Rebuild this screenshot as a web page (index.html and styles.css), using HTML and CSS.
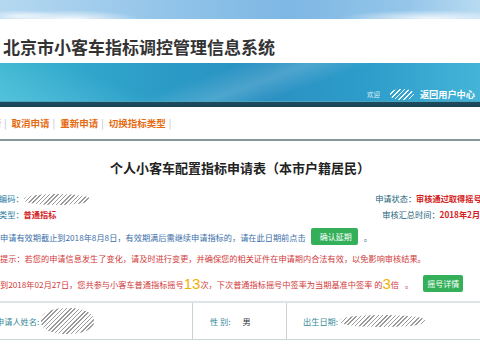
FILE: index.html
```html
<!DOCTYPE html>
<html lang="zh-CN">
<head>
<meta charset="utf-8">
<title>北京市小客车指标调控管理信息系统</title>
<link rel="stylesheet" href="styles.css">
</head>
<body>
<header class="header">
  <div class="sky"></div>
  <div class="title-bar"><h1 class="site-title">北京市小客车指标调控管理信息系统</h1></div>
  <div class="banner">
    <div class="welcome">
      <span class="welcome-label">欢迎</span>
      <span class="redact redact-user"></span>
      <a class="back-link">返回用户中心</a>
    </div>
  </div>
</header>
<nav class="actions">
  <a class="action">申请</a><span class="sep">|</span>
  <a class="action">取消申请</a><span class="sep">|</span>
  <a class="action">重新申请</a><span class="sep">|</span>
  <a class="action">切换指标类型</a><span class="sep">|</span>
</nav>
<div class="divider"></div>
<main class="form">
  <h2 class="form-title">个人小客车配置指标申请表（本市户籍居民）</h2>
  <div class="info">
    <div class="info-left">
      <div class="info-line"><span class="label">编码：</span><span class="redact redact-code"></span></div>
      <div class="info-line"><span class="label">类型：</span><span class="value-red">普通指标</span></div>
    </div>
    <div class="info-right">
      <div class="info-line"><span class="label-dark">申请状态：</span><span class="value-red">审核通过取得摇号资格</span></div>
      <div class="info-line"><span class="label-dark">审核汇总时间：</span><span class="value-red">2018年2月28日</span></div>
    </div>
  </div>
  <p class="notice notice-blue">申请有效期截止到2018年8月8日，有效期满后需继续申请指标的，请在此日期前点击<button class="btn btn-extend">确认延期</button><span class="period">。</span></p>
  <p class="notice notice-red notice-tip">提示：若您的申请信息发生了变化，请及时进行变更，并确保您的相关证件在申请期内合法有效，以免影响审核结果。</p>
  <p class="notice notice-red notice-lottery">到2018年02月27日，您共参与小客车普通指标摇号<span class="big-num">13</span>次，下次普通指标摇号中签率为当期基准中签率 的<span class="big-num">3</span>倍 <span class="period">。</span><button class="btn btn-detail">摇号详情</button></p>
  <div class="person-row">
    <div class="cell cell-name"><span class="cell-label">申请人姓名:</span><span class="redact redact-name"></span></div>
    <div class="cell cell-sex"><span class="cell-label">性 别:</span><span class="cell-value">男</span></div>
    <div class="cell cell-birth"><span class="cell-label">出生日期:</span><span class="redact redact-birth"></span></div>
  </div>
</main>
</body>
</html>
```
FILE: styles.css
```css
* { box-sizing: border-box; margin: 0; padding: 0; }
html, body { width: 480px; height: 346px; overflow: hidden; background: #fff; }
body {
  font-family: "Noto Sans CJK SC", "Noto Sans", sans-serif;
  font-size: 8.2px;
  color: #333;
}

.sky {
  height: 19px;
  background:
    radial-gradient(ellipse 70px 9px at 70px 19px, rgba(255,255,255,.85), rgba(255,255,255,0)),
    radial-gradient(ellipse 40px 6px at 20px 16px, rgba(255,255,255,.7), rgba(255,255,255,0)),
    radial-gradient(ellipse 90px 8px at 430px 18px, rgba(255,255,255,.8), rgba(255,255,255,0)),
    linear-gradient(90deg, #b5d8f0 0%, #92c4e9 35%, #7db7e3 60%, #95c6ea 85%, #b8daf1 100%);
}

.title-bar { height: 44px; padding: 18px 0 0 3px; }
.site-title {
  font-size: 17px;
  line-height: 20px;
  font-weight: 700;
  color: #333;
  white-space: nowrap;
}

.banner {
  height: 44px;
  display: flex;
  justify-content: flex-end;
  align-items: flex-end;
  padding: 0 5px 7px 0;
  background:
    linear-gradient(to bottom, rgba(0,0,0,0) 86%, #4aa3bf 86%, #4aa3bf 89%, #1d4b5e 89%, #1a4455 100%),
    linear-gradient(160deg, rgba(255,255,255,0) 40%, rgba(255,255,255,.16) 52%, rgba(255,255,255,0) 62%),
    linear-gradient(20deg, rgba(120,215,235,.45) 0%, rgba(120,215,235,0) 30%),
    linear-gradient(90deg, #3ab4d0 0%, #2c9ec8 30%, #2a90c2 55%, #2e9ecb 78%, #44b5d8 100%);
}
.welcome { display: flex; align-items: center; white-space: nowrap; line-height: 12px; }
.welcome-label { font-size: 6.5px; color: #d4eef6; margin-right: 10px; }
.back-link { font-size: 9.2px; font-weight: 700; color: #fff; margin-left: 6px; }

.redact {
  display: inline-block;
  background: repeating-linear-gradient(135deg, #9a9a9a 0 1px, rgba(255,255,255,0) 1px 3px);
  border-radius: 45%;
}
.redact-user {
  width: 24px; height: 11px;
  background: repeating-linear-gradient(135deg, rgba(255,255,255,.95) 0 1.3px, rgba(255,255,255,0) 1.3px 3.3px);
}
.redact-code { width: 66px; height: 11px; }
.redact-name { width: 53px; height: 26px; }
.redact-birth { width: 85px; height: 12px; }

.actions {
  height: 32px;
  display: flex;
  align-items: center;
  margin-left: -18px;
  white-space: nowrap;
  font-size: 9.5px;
  font-weight: 700;
  color: #e66a10;
}
.sep { color: #bdbdbd; font-weight: 400; margin: 0 5px 0 3px; }
.divider { height: 2px; background: #869898; }

.form-title {
  margin-top: 19px;
  text-align: center;
  font-size: 13px;
  line-height: 16px;
  font-weight: 700;
  color: #222;
  white-space: nowrap;
}

.info {
  margin-top: 14px;
  display: flex;
  justify-content: space-between;
  margin-right: -18px;
  white-space: nowrap;
}
.info-left { margin-left: -1px; }
.info-right { text-align: right; }
.info-line { height: 16px; line-height: 16px; }
.info-line .redact { vertical-align: middle; }
.label { color: #2b7ca0; }
.label-dark { color: #1e5f7a; }
.value-red { color: #d42020; font-weight: 700; }

.notice { white-space: nowrap; display: flex; align-items: center; }
.notice-blue { margin-top: 6px; height: 17px; color: #3a6ea8; }
.notice-red { color: #d03a3a; }
.notice-tip { margin-top: 5px; height: 16px; }
.notice-lottery { margin-top: 9px; height: 17px; }
.period { margin-left: 6px; }
.big-num { font-size: 15px; line-height: 15px; color: #f0b000; font-family: "Liberation Sans", sans-serif; }

.btn {
  height: 17px;
  border: 0;
  border-radius: 2px;
  background: #34b05a;
  color: #fff;
  font-family: inherit;
  font-size: 8px;
  padding: 0 9px;
}
.btn-extend { width: 47px; margin-left: 5px; }
.btn-detail { width: 40px; margin-left: 10px; padding: 0 4px; }

.person-row {
  margin-top: 9px;
  height: 39px;
  display: flex;
  border-top: 2px solid #dce6e6;
  border-bottom: 1px solid #ccd7d7;
  white-space: nowrap;
}
.cell { display: flex; align-items: center; }
.cell-name { width: 197px; margin-left: -4px; border-right: 1px solid #c8d2d2; }
.cell-name .redact { margin-left: 2px; }
.cell-sex { width: 94px; padding-left: 17px; border-right: 1px solid #c8d2d2; }
.cell-birth { padding-left: 16px; }
.cell-label { color: #3a8a9a; }
.cell-value { color: #333; margin-left: 12px; }
.cell-birth .redact { margin-left: 2px; }
```
